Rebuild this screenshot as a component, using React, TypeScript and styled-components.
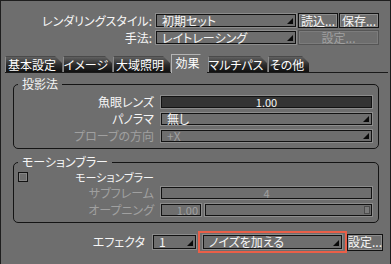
import React from "react";
import styled, { createGlobalStyle } from "styled-components";

const C = {
  bg: "#6e6e6e",
  text: "#f6f6f6",
  dim: "#a0a0a0",
  edge: "#121212",
  rim: "#8c8c8c",
  well: "#343434",
  mark: "#ea5f48",
};

const GlobalStyle = createGlobalStyle`
  html, body {
    margin: 0;
    padding: 0;
    background: ${C.bg};
  }
  body {
    font-family: "Noto Sans CJK JP", "Noto Sans", sans-serif;
  }
`;

const Panel = styled.div`
  width: 391px;
  height: 264px;
  box-sizing: border-box;
  border: 1px solid #1e1e1e;
  border-bottom: none;
  background: ${C.bg};
  color: ${C.text};
  font-size: 12px;
  line-height: 14px;
  font-feature-settings: "palt";
  display: flex;
  flex-direction: column;
  overflow: hidden;
`;

const Header = styled.div`
  display: grid;
  grid-template-columns: 153px 142px 40px 40px;
  grid-auto-rows: 15px;
  column-gap: 1px;
  row-gap: 2px;
  margin-top: 12px;
`;

const HeaderLabel = styled.div`
  text-align: right;
  padding-right: 2px;
  line-height: 15px;
  white-space: nowrap;
`;

const Select = styled.div<{ $disabled?: boolean; $height?: number }>`
  position: relative;
  box-sizing: border-box;
  height: ${({ $height }) => ($height ? `${$height}px` : "100%")};
  border: 1px solid ${C.rim};
  box-shadow: inset 0 0 0 1px ${C.edge};
  padding: 0 16px 0 6px;
  display: flex;
  align-items: center;
  line-height: 12px;
  color: ${({ $disabled }) => ($disabled ? C.dim : C.text)};
  white-space: nowrap;

  &::after {
    content: "";
    position: absolute;
    right: 3px;
    bottom: 3px;
    width: 6px;
    height: 6px;
    background: #0a0a0a;
    clip-path: polygon(100% 0, 100% 100%, 0 100%);
  }
`;

const Button = styled.div<{ $disabled?: boolean; $span?: number; $height?: number }>`
  box-sizing: border-box;
  height: ${({ $height }) => ($height ? `${$height}px` : "100%")};
  grid-column: span ${({ $span }) => $span ?? 1};
  border: 1px solid ${({ $disabled }) => ($disabled ? "#555" : C.edge)};
  box-shadow: inset 0 0 0 1px ${({ $disabled }) => ($disabled ? "#7c7c7c" : C.rim)};
  display: flex;
  align-items: center;
  justify-content: center;
  line-height: 12px;
  color: ${({ $disabled }) => ($disabled ? C.dim : C.text)};
  white-space: nowrap;
`;

const TabBar = styled.div`
  display: flex;
  align-items: flex-end;
  gap: 1px;
  height: 18px;
  margin: 9px 2px 0 4px;
  border-bottom: 1px solid #1a1a1a;
`;

const slant = "polygon(0 0, calc(100% - 7px) 0, 100% 7px, 100% 100%, 0 100%)";

const Tab = styled.div<{ $w: number; $active?: boolean }>`
  flex: none;
  box-sizing: border-box;
  width: ${({ $w }) => $w}px;
  height: ${({ $active }) => ($active ? 19 : 16)}px;
  margin-bottom: ${({ $active }) => ($active ? -1 : 0)}px;
  clip-path: ${slant};
  background: ${({ $active }) =>
    $active ? C.bg : "linear-gradient(#606060, #2a2a2a 55%, #101010)"};
  border-left: 1px solid ${({ $active }) => ($active ? "#b4b4b4" : "#8a8a8a")};
  border-top: 1px solid ${({ $active }) => ($active ? "#b4b4b4" : "#4a4a4a")};
  display: flex;
  align-items: ${({ $active }) => ($active ? "flex-start" : "center")};
  padding-top: ${({ $active }) => ($active ? 1 : 0)}px;
  justify-content: center;
  padding-right: 4px;
  color: #fff;
  white-space: nowrap;
`;

const Group = styled.fieldset<{ $top: number; $pt: number; $gap: number }>`
  margin: ${({ $top }) => $top}px 0 0 12px;
  width: 366px;
  min-inline-size: 0;
  box-sizing: border-box;
  border: 1px solid #141414;
  border-radius: 5px;
  padding: ${({ $pt }) => $pt}px 4px 5px 0;
  display: flex;
  flex-direction: column;
  gap: ${({ $gap }) => $gap}px;
`;

const Legend = styled.legend`
  margin-left: 4px;
  padding: 0 4px;
  line-height: 14px;
  color: ${C.text};
`;

const Row = styled.div<{ $h?: number }>`
  display: grid;
  grid-template-columns: 140px 213px;
  column-gap: 6px;
  height: ${({ $h }) => $h ?? 14}px;
`;

const Label = styled.div<{ $disabled?: boolean }>`
  text-align: right;
  line-height: 14px;
  white-space: nowrap;
  color: ${({ $disabled }) => ($disabled ? C.dim : C.text)};
`;

const CheckCell = styled.div`
  display: flex;
  align-items: center;
  justify-content: space-between;
  padding-left: 4px;
  line-height: 12px;
`;

const CheckLabel = styled.span`
  white-space: nowrap;
  font-size: 11px;
  line-height: 12px;
`;

const Check = styled.div`
  width: 10px;
  height: 10px;
  box-sizing: border-box;
  border: 1px solid ${C.edge};
  box-shadow: inset 0 0 0 1px #858585;
`;

const Field = styled.div<{ $dark?: boolean; $disabled?: boolean; $align?: string; $w?: number }>`
  box-sizing: border-box;
  ${({ $w }) => ($w ? `width: ${$w}px; flex: none;` : "flex: 1;")}
  height: 100%;
  border: 1px solid ${C.rim};
  box-shadow: inset 0 0 0 1px ${C.edge};
  background: ${({ $dark }) => ($dark ? C.well : C.bg)};
  color: ${({ $disabled }) => ($disabled ? C.dim : C.text)};
  text-align: ${({ $align }) => $align ?? "left"};
  padding: 0 3px;
  font-size: 11px;
  line-height: 12px;
  white-space: nowrap;
`;

const SplitCell = styled.div`
  display: flex;
  gap: 2px;
`;

const Slider = styled.div`
  position: relative;
  flex: 1;
  box-sizing: border-box;
  border: 1px solid ${C.rim};
  box-shadow: inset 0 0 0 1px ${C.edge};
`;

const Thumb = styled.div`
  position: absolute;
  right: 2px;
  top: 2px;
  bottom: 2px;
  width: 4px;
  border: 1px solid #4c4c4c;
  background: #7a7a7a;
`;

const Footer = styled.div`
  display: flex;
  align-items: center;
  margin-top: 8px;
`;

const FooterLabel = styled.div`
  width: 151px;
  box-sizing: border-box;
  padding-right: 7px;
  text-align: right;
  white-space: nowrap;
`;

const Highlight = styled.div`
  box-sizing: border-box;
  width: 149px;
  height: 22px;
  margin-left: 1px;
  border: 2px solid ${C.mark};
  padding: 1px 2px;
  display: flex;
`;

const tabs = [
  { label: "基本設定", w: 57 },
  { label: "イメージ", w: 49 },
  { label: "大域照明", w: 57 },
  { label: "効果", w: 36, active: true },
  { label: "マルチパス", w: 59 },
  { label: "その他", w: 41 },
];

export default function App() {
  return (
    <>
      <GlobalStyle />
      <Panel>
        <Header>
          <HeaderLabel>レンダリングスタイル:</HeaderLabel>
          <Select>初期セット</Select>
          <Button>読込...</Button>
          <Button>保存...</Button>
          <HeaderLabel>手法:</HeaderLabel>
          <Select>レイトレーシング</Select>
          <Button $disabled $span={2}>
            設定...
          </Button>
        </Header>

        <TabBar>
          {tabs.map((t) => (
            <Tab key={t.label} $w={t.w} $active={t.active}>
              {t.label}
            </Tab>
          ))}
        </TabBar>

        <Group $top={4} $pt={4} $gap={3}>
          <Legend>投影法</Legend>
          <Row>
            <Label>魚眼レンズ</Label>
            <Field $dark $align="center">
              1.00
            </Field>
          </Row>
          <Row>
            <Label>パノラマ</Label>
            <Select>無し</Select>
          </Row>
          <Row>
            <Label $disabled>プローブの方向</Label>
            <Select $disabled>+X</Select>
          </Row>
        </Group>

        <Group $top={6} $pt={2} $gap={3}>
          <Legend>モーションブラー</Legend>
          <Row $h={12}>
            <CheckCell>
              <Check />
              <CheckLabel>モーションブラー</CheckLabel>
            </CheckCell>
          </Row>
          <Row>
            <Label $disabled>サブフレーム</Label>
            <Field $disabled $align="center">
              4
            </Field>
          </Row>
          <Row>
            <Label $disabled>オープニング</Label>
            <SplitCell>
              <Field $disabled $align="right" $w={42}>
                1.00
              </Field>
              <Slider>
                <Thumb />
              </Slider>
            </SplitCell>
          </Row>
        </Group>

        <Footer>
          <FooterLabel>エフェクタ</FooterLabel>
          <Select $height={16} style={{ width: 45 }}>
            1
          </Select>
          <Highlight>
            <Select style={{ flex: 1 }}>ノイズを加える</Select>
          </Highlight>
          <Button $height={17} style={{ width: 36 }}>
            設定...
          </Button>
        </Footer>
      </Panel>
    </>
  );
}
